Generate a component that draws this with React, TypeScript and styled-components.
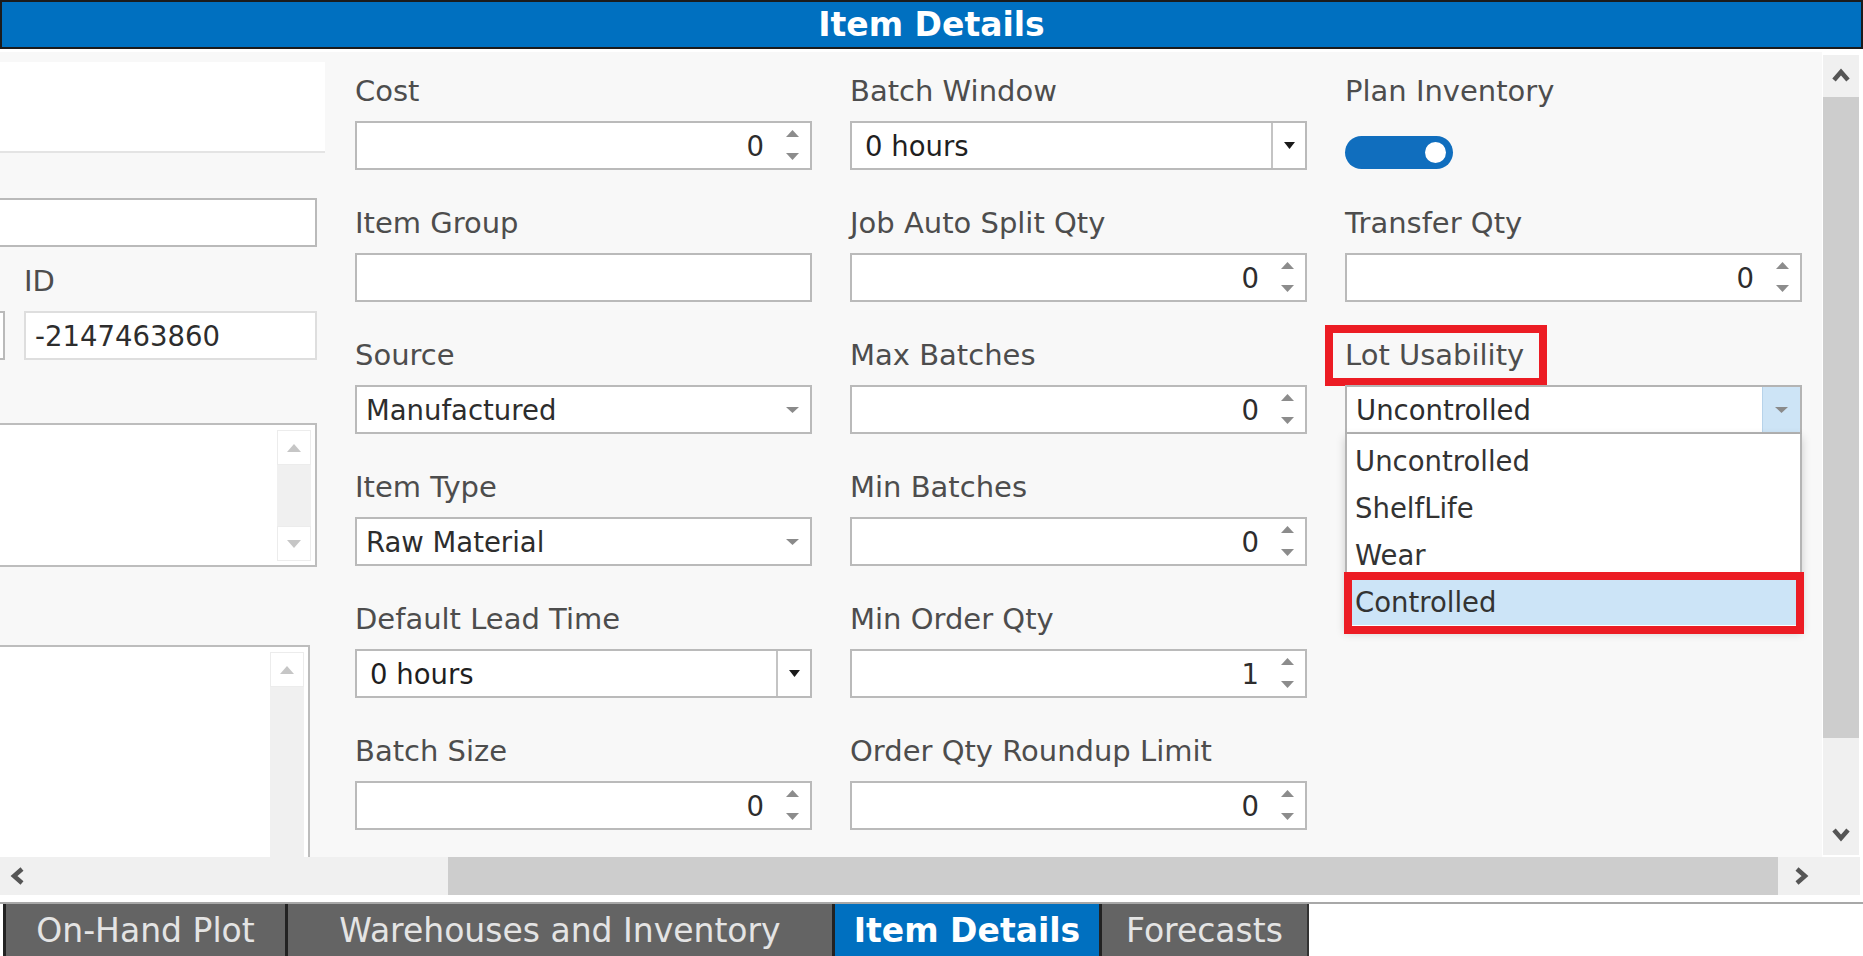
import styled, { createGlobalStyle } from 'styled-components';

const FONT = `"DejaVu Sans", Verdana, "Liberation Sans", sans-serif`;

const Global = createGlobalStyle`
  html, body { margin: 0; padding: 0; background: #fff; }
  body { font-family: ${FONT}; }
  *, *::before, *::after { box-sizing: border-box; }
`;

type Caret = { up?: boolean; color: string; w?: number; h?: number };

function Caret({ up, color, w = 13, h = 7 }: Caret) {
  return (
    <svg width={w} height={h} viewBox="0 0 13 7" preserveAspectRatio="none">
      <path d={up ? 'M0 7 L6.5 0 L13 7 Z' : 'M0 0 L13 0 L6.5 7 Z'} fill={color} />
    </svg>
  );
}

type Dir = 'up' | 'down' | 'left' | 'right';

function Chevron({ dir }: { dir: Dir }) {
  const d = {
    up: 'M2 13 L9 5 L16 13',
    down: 'M2 5 L9 13 L16 5',
    left: 'M13 2 L5 9 L13 16',
    right: 'M5 2 L13 9 L5 16',
  }[dir];
  return (
    <svg width="18" height="18" viewBox="0 0 18 18">
      <path d={d} fill="none" stroke="#555" strokeWidth="4.5" strokeLinejoin="miter" />
    </svg>
  );
}

type Field =
  | { kind: 'spin'; label: string; value: string }
  | { kind: 'text'; label: string }
  | { kind: 'select'; label: string; value: string }
  | { kind: 'combo'; label: string; value: string };

const COLUMNS: Field[][] = [
  [
    { kind: 'spin', label: 'Cost', value: '0' },
    { kind: 'text', label: 'Item Group' },
    { kind: 'select', label: 'Source', value: 'Manufactured' },
    { kind: 'select', label: 'Item Type', value: 'Raw Material' },
    { kind: 'combo', label: 'Default Lead Time', value: '0 hours' },
    { kind: 'spin', label: 'Batch Size', value: '0' },
  ],
  [
    { kind: 'combo', label: 'Batch Window', value: '0 hours' },
    { kind: 'spin', label: 'Job Auto Split Qty', value: '0' },
    { kind: 'spin', label: 'Max Batches', value: '0' },
    { kind: 'spin', label: 'Min Batches', value: '0' },
    { kind: 'spin', label: 'Min Order Qty', value: '1' },
    { kind: 'spin', label: 'Order Qty Roundup Limit', value: '0' },
  ],
];

const LOT_OPTIONS = ['Uncontrolled', 'ShelfLife', 'Wear', 'Controlled'];

const TABS = [
  { label: 'On-Hand Plot', w: 279 },
  { label: 'Warehouses and Inventory', w: 544 },
  { label: 'Item Details', w: 264, active: true },
  { label: 'Forecasts', w: 205 },
];

function Control({ field }: { field: Field }) {
  switch (field.kind) {
    case 'spin':
      return (
        <Box>
          <SpinValue>{field.value}</SpinValue>
          <Spinner>
            <Caret up color="#8c8c8c" />
            <Caret color="#8c8c8c" />
          </Spinner>
        </Box>
      );
    case 'text':
      return <Box />;
    case 'select':
      return (
        <SelectBox>
          <BoxText>{field.value}</BoxText>
          <SelectArrow>
            <Caret color="#8a8a8a" h={6} />
          </SelectArrow>
        </SelectBox>
      );
    case 'combo':
      return (
        <ComboBox>
          <ComboText>{field.value}</ComboText>
          <ComboButton>
            <Caret color="#1a1a1a" w={11} h={7} />
          </ComboButton>
        </ComboBox>
      );
  }
}

function MiniScroll() {
  return (
    <MiniTrack>
      <MiniBtn>
        <Caret up color="#c6c6c6" w={14} h={8} />
      </MiniBtn>
      <MiniBtn>
        <Caret color="#c6c6c6" w={14} h={8} />
      </MiniBtn>
    </MiniTrack>
  );
}

export default function App() {
  return (
    <Page>
      <Global />
      <TitleBar>Item Details</TitleBar>

      <Body>
        <Viewport>
          <Form>
            <LeftCol>
              <PhotoBox />
              <NameInput />
              <IdRow>
                <Field>
                  <Label>&nbsp;</Label>
                  <Box />
                </Field>
                <Field>
                  <Label>ID</Label>
                  <ReadOnlyBox>
                    <BoxText>-2147463860</BoxText>
                  </ReadOnlyBox>
                </Field>
              </IdRow>
              <NotesArea>
                <MiniScroll />
              </NotesArea>
              <CommentArea>
                <MiniScroll />
              </CommentArea>
            </LeftCol>

            {COLUMNS.map((col, i) => (
              <FieldCol key={i}>
                {col.map((f) => (
                  <Field key={f.label}>
                    <Label>{f.label}</Label>
                    <Control field={f} />
                  </Field>
                ))}
              </FieldCol>
            ))}

            <FieldCol>
              <Field>
                <Label>Plan Inventory</Label>
                <Toggle>
                  <Knob />
                </Toggle>
              </Field>
              <Field>
                <Label>Transfer Qty</Label>
                <Control field={{ kind: 'spin', label: 'Transfer Qty', value: '0' }} />
              </Field>
              <Field>
                <Label>
                  <Marked>Lot Usability</Marked>
                </Label>
                <SelectWrap>
                  <LotSelect>
                    <LotText>Uncontrolled</LotText>
                    <LotButton>
                      <Caret color="#8a8a8a" h={6} />
                    </LotButton>
                  </LotSelect>
                  <Dropdown>
                    {LOT_OPTIONS.map((o) => (
                      <Option key={o} $active={o === 'Controlled'}>
                        {o}
                      </Option>
                    ))}
                  </Dropdown>
                </SelectWrap>
              </Field>
            </FieldCol>
          </Form>
        </Viewport>

        <VScroll>
          <ScrollBtn>
            <Chevron dir="up" />
          </ScrollBtn>
          <VThumb />
          <DownBtn>
            <Chevron dir="down" />
          </DownBtn>
        </VScroll>
      </Body>

      <HScroll>
        <HArrow>
          <Chevron dir="left" />
        </HArrow>
        <HThumb />
        <HArrowRight>
          <Chevron dir="right" />
        </HArrowRight>
      </HScroll>

      <TabBar>
        {TABS.map((t) => (
          <Tab key={t.label} $w={t.w} $active={!!t.active}>
            {t.label}
          </Tab>
        ))}
      </TabBar>
    </Page>
  );
}

const Page = styled.div`
  width: 1863px;
  height: 956px;
  display: flex;
  flex-direction: column;
  overflow: hidden;
  background: #fff;
`;

const TitleBar = styled.div`
  height: 49px;
  flex-shrink: 0;
  border: 2px solid #1b1b1b;
  background: #0070c0;
  color: #fff;
  font-size: 33px;
  font-weight: bold;
  display: flex;
  align-items: center;
  justify-content: center;
  line-height: 1;
`;

const Body = styled.div`
  display: flex;
  height: 805px;
  flex-shrink: 0;
  margin-top: 3px;
`;

const Viewport = styled.div`
  width: 1823px;
  flex-shrink: 0;
  background: #f8f8f8;
  border-right: 1px solid #fff;
  overflow: hidden;
  position: relative;
`;

const Form = styled.div`
  display: flex;
  gap: 38px;
  margin-left: -140px;
  align-items: flex-start;
`;

const LeftCol = styled.div`
  width: 457px;
  flex-shrink: 0;
  display: flex;
  flex-direction: column;
  padding-top: 10px;
`;

const PhotoBox = styled.div`
  height: 91px;
  margin-right: -8px;
  background: #fff;
  border-bottom: 2px solid #e4e4e4;
`;

const Box = styled.div`
  height: 49px;
  border: 2px solid #bababa;
  background: #fff;
  display: flex;
  align-items: center;
  font-size: 27.5px;
  color: #2d2d2d;
  white-space: nowrap;
`;

const NameInput = styled(Box)`
  margin-top: 45px;
`;

const IdRow = styled.div`
  display: grid;
  grid-template-columns: 145px 293px;
  column-gap: 19px;
  margin-top: 17px;
`;

const ReadOnlyBox = styled(Box)`
  border-color: #dedede;
  padding-left: 9px;
`;

const NotesArea = styled.div`
  height: 144px;
  margin-top: 63px;
  background: #fff;
  border: 2px solid #bdbdbd;
  display: flex;
  justify-content: flex-end;
  padding: 5px 4px 4px 0;
`;

const CommentArea = styled(NotesArea)`
  height: 260px;
  width: 450px;
  margin-top: 78px;
  padding-bottom: 0;
`;

const MiniTrack = styled.div`
  width: 34px;
  background: #f0f0f0;
  display: flex;
  flex-direction: column;
  justify-content: space-between;
`;

const MiniBtn = styled.div`
  height: 35px;
  background: #fff;
  border: 1px solid #ececec;
  display: flex;
  align-items: center;
  justify-content: center;
`;

const FieldCol = styled.div`
  width: 457px;
  flex-shrink: 0;
  display: flex;
  flex-direction: column;
  gap: 36px;
  padding-top: 22px;
`;

const Field = styled.div`
  display: flex;
  flex-direction: column;
  gap: 13px;
`;

const Label = styled.div`
  height: 34px;
  font-size: 29px;
  line-height: 34px;
  color: #4d4d4d;
  white-space: nowrap;
`;

const Marked = styled.span`
  display: inline-block;
  position: relative;

  &::after {
    content: '';
    position: absolute;
    top: -13px;
    bottom: -14px;
    left: -20px;
    right: -23px;
    border: 8px solid #ec1c24;
    pointer-events: none;
  }
`;

const SpinValue = styled.span`
  flex: 1;
  text-align: right;
`;

const Spinner = styled.div`
  height: 100%;
  display: flex;
  flex-direction: column;
  justify-content: space-between;
  padding: 7px 0 8px;
  margin: 0 11px 0 22px;
`;

const BoxText = styled.span`
  flex: 1;
  overflow: hidden;
`;

const SelectBox = styled(Box)`
  padding-left: 9px;
`;

const SelectArrow = styled.span`
  display: flex;
  margin: 0 11px 0 8px;
`;

const ComboBox = styled(Box)`
  padding-left: 13px;
  color: #1f1f1f;
`;

const ComboText = styled(BoxText)``;

const ComboButton = styled.span`
  width: 34px;
  height: 100%;
  border-left: 2px solid #c4c4c4;
  display: flex;
  align-items: center;
  justify-content: center;
`;

const Toggle = styled.div`
  width: 108px;
  height: 33px;
  margin-top: 15px;
  margin-bottom: 1px;
  border-radius: 17px;
  background: #106ebe;
  display: flex;
  align-items: center;
  justify-content: flex-end;
  padding-right: 7px;
`;

const Knob = styled.span`
  width: 21px;
  height: 21px;
  border-radius: 50%;
  background: #fff;
`;

const SelectWrap = styled.div`
  position: relative;
`;

const LotSelect = styled(Box)`
  padding-left: 9px;
  border-color: #b4b4b4;
`;

const LotText = styled(BoxText)``;

const LotButton = styled.span`
  width: 38px;
  height: 100%;
  background: #cde4f6;
  border-left: 1px solid #b7d3ea;
  display: flex;
  align-items: center;
  justify-content: center;
`;

const Dropdown = styled.div`
  position: absolute;
  top: 100%;
  left: 0;
  right: 0;
  z-index: 5;
  background: #fff;
  border: 2px solid #b4b4b4;
  border-top: none;
  box-shadow: 0 3px 9px rgba(0, 0, 0, 0.18);
  padding: 3px 0 3px;
`;

const Option = styled.div<{ $active: boolean }>`
  height: 47px;
  padding-left: 8px;
  display: flex;
  align-items: center;
  font-size: 27.5px;
  color: #333;
  position: relative;
  background: ${({ $active }) => ($active ? '#cce4f7' : 'transparent')};

  ${({ $active }) =>
    $active &&
    `
    &::after {
      content: '';
      position: absolute;
      top: -6px;
      bottom: -9px;
      left: -3px;
      right: -4px;
      border: 8px solid #ec1c24;
    }
  `}
`;

const VScroll = styled.div`
  width: 36px;
  flex-shrink: 0;
  margin: 3px 0 2px;
  background: #f0f0f0;
  display: flex;
  flex-direction: column;
`;

const ScrollBtn = styled.div`
  height: 42px;
  flex-shrink: 0;
  display: flex;
  align-items: center;
  justify-content: center;
`;

const DownBtn = styled(ScrollBtn)`
  margin-top: auto;
`;

const VThumb = styled.div`
  height: 641px;
  background: #cdcdcd;
`;

const HScroll = styled.div`
  width: 1860px;
  height: 38px;
  flex-shrink: 0;
  background: #f0f0f0;
  display: flex;
`;

const HArrow = styled.div`
  width: 36px;
  display: flex;
  align-items: center;
  justify-content: center;
`;

const HThumb = styled.div`
  width: 1330px;
  margin-left: 412px;
  background: #cdcdcd;
`;

const HArrowRight = styled(HArrow)`
  width: 45px;
`;

const TabBar = styled.div`
  margin-top: 7px;
  flex: 1;
  border-top: 2px solid #a8a8a8;
  display: flex;
  padding-left: 3px;
`;

const Tab = styled.div<{ $w: number; $active: boolean }>`
  width: ${({ $w }) => $w + 3}px;
  border-left: 3px solid #222;
  background: ${({ $active }) => ($active ? '#0070c0' : '#646464')};
  color: ${({ $active }) => ($active ? '#fff' : '#e4e4e4')};
  font-weight: ${({ $active }) => ($active ? 'bold' : 'normal')};
  font-size: 33px;
  display: flex;
  align-items: center;
  justify-content: center;
  white-space: nowrap;

  &:last-child {
    width: ${({ $w }) => $w + 5}px;
    border-right: 2px solid #333;
  }
`;
